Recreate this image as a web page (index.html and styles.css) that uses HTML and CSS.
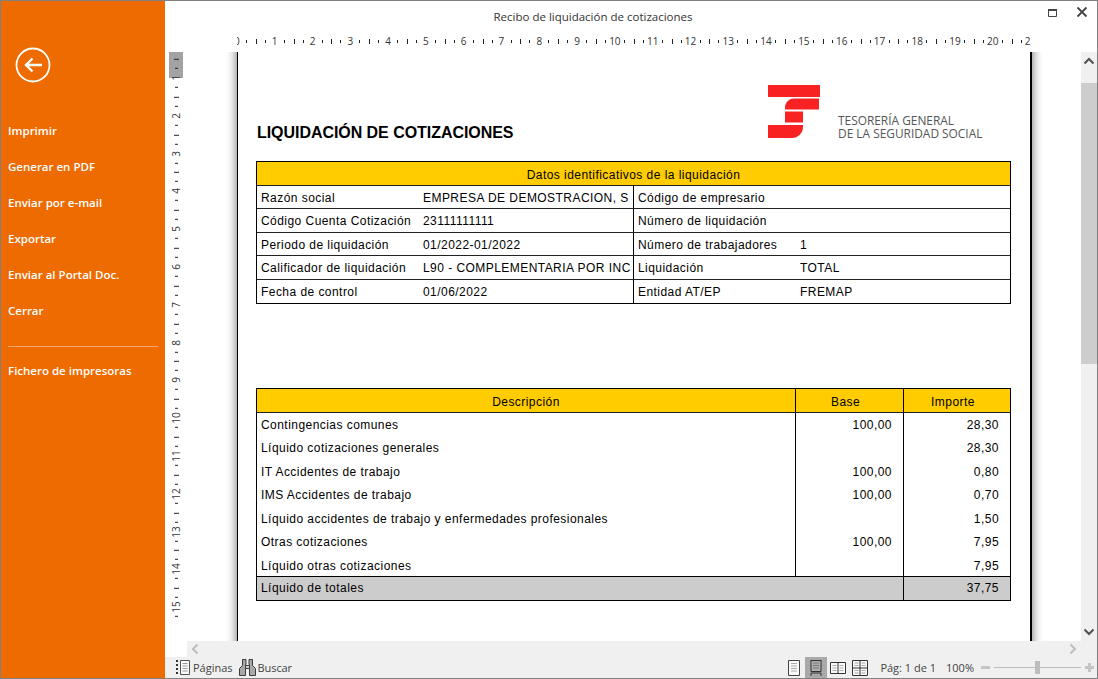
FILE: index.html
```html
<!DOCTYPE html>
<html lang="es">
  <head>
    <meta charset="utf-8" />
    <title>Recibo de liquidación de cotizaciones</title>
    <link rel="stylesheet" href="styles.css">
  </head>
  <body>
    <div class="window">
      <!--Sidebar-->
      <nav class="sidebar">
        <div class="back-button">
          <svg width="36" height="36" viewBox="0 0 36 36">
            <circle cx="18" cy="18" r="16.5" fill="none" stroke="#fff" stroke-width="1.800"></circle>
            <path d="M27 18H11M17.5 11.5L11 18l6.500 6.500" fill="none" stroke="#fff" stroke-width="2.400"></path>
          </svg>
        </div>
        <ul class="menu">
          <li>Imprimir</li>
          <li>Generar en PDF</li>
          <li>Enviar por e-mail</li>
          <li>Exportar</li>
          <li>Enviar al Portal Doc.</li>
          <li>Cerrar</li>
        </ul>
        <div class="menu-separator"></div>
        <ul class="menu">
          <li>Fichero de impresoras</li>
        </ul>
      </nav>

      <div class="main">
        <!--Title-->
        <header class="titlebar">
          <span class="title">Recibo de liquidación de cotizaciones</span>
          <div class="window-buttons">
            <svg width="11" height="11" viewBox="0 0 11 11">
              <path d="M1.500 2.500h8v7h-8z" fill="none" stroke="#444" stroke-width="1"></path>
              <path d="M1 3h9" stroke="#444" stroke-width="2"></path>
            </svg>
            <svg width="12" height="12" viewBox="0 0 12 12">
              <path d="M1.500 1.500l9 9M10.500 1.500l-9 9" stroke="#444" stroke-width="1.800"></path>
            </svg>
          </div>
        </header>

        <!--Horizontal ruler-->
        <div class="hruler">
          <span>0</span><span>1</span><span>2</span><span>3</span><span>4</span><span>5</span><span>6</span><span>7</span><span>8</span><span>9</span><span>10</span><span>11</span><span>12</span><span>13</span><span>14</span><span>15</span><span>16</span><span>17</span><span>18</span><span>19</span><span>20</span><span class="hruler-end">2</span>
        </div>

        <div class="workspace">
          <!--Vertical ruler-->
          <div class="vruler">
            <span>1</span><span>2</span><span>3</span><span>4</span><span>5</span><span>6</span><span>7</span><span>8</span><span>9</span><span>10</span><span>11</span><span>12</span><span>13</span><span>14</span><span>15</span>
          </div>

          <div class="viewport">
            <div class="page">
              <div class="report-header">
                <h1 class="report-title">LIQUIDACIÓN DE COTIZACIONES</h1>
                <div class="logo">
                  <svg class="logo-mark" width="52" height="54" viewBox="0 0 52 54">
                    <path d="M0 1h52v12H0z" fill="#f92222"></path>
                    <path d="M51 14.500v11H17v-2c0-5 4-9 9-9z" fill="#f92222"></path>
                    <path d="M17 27.500h18v11H17z" fill="#f92222"></path>
                    <path d="M0 41h35v2c0 6-5 11-11 11H0z" fill="#f92222"></path>
                  </svg>
                  <div class="logo-text">TESORERÍA GENERAL<br>DE LA SEGURIDAD SOCIAL</div>
                </div>
              </div>

              <!--Identification table-->
              <div class="report-table id-table">
                <div class="row head-row">
                  <div class="cell cell-center">Datos identificativos de la liquidación</div>
                </div>
                <div class="row">
                  <div class="id-half"><span class="id-label">Razón social</span><span class="id-value">EMPRESA DE DEMOSTRACION, S</span></div>
                  <div class="id-half id-right"><span class="id-label">Código de empresario</span></div>
                </div>
                <div class="row">
                  <div class="id-half"><span class="id-label">Código Cuenta Cotización</span><span class="id-value">23111111111</span></div>
                  <div class="id-half id-right"><span class="id-label">Número de liquidación</span></div>
                </div>
                <div class="row">
                  <div class="id-half"><span class="id-label">Periodo de liquidación</span><span class="id-value">01/2022-01/2022</span></div>
                  <div class="id-half id-right"><span class="id-label">Número de trabajadores</span><span class="id-value">1</span></div>
                </div>
                <div class="row">
                  <div class="id-half"><span class="id-label">Calificador de liquidación</span><span class="id-value">L90 - COMPLEMENTARIA POR INC</span></div>
                  <div class="id-half id-right"><span class="id-label">Liquidación</span><span class="id-value">TOTAL</span></div>
                </div>
                <div class="row">
                  <div class="id-half"><span class="id-label">Fecha de control</span><span class="id-value">01/06/2022</span></div>
                  <div class="id-half id-right"><span class="id-label">Entidad AT/EP</span><span class="id-value">FREMAP</span></div>
                </div>
              </div>

              <!--Amounts table-->
              <div class="report-table amounts-table">
                <div class="row head-row">
                  <div class="cell cell-center col-desc">Descripción</div>
                  <div class="cell cell-center col-num">Base</div>
                  <div class="cell cell-center col-num col-last">Importe</div>
                </div>
                <div class="amounts-body">
                  <div class="row plain-row"><div class="cell col-desc">Contingencias comunes</div><div class="cell cell-right col-num">100,00</div><div class="cell cell-right col-num col-last">28,30</div></div>
                  <div class="row plain-row"><div class="cell col-desc">Líquido cotizaciones generales</div><div class="cell cell-right col-num"></div><div class="cell cell-right col-num col-last">28,30</div></div>
                  <div class="row plain-row"><div class="cell col-desc">IT Accidentes de trabajo</div><div class="cell cell-right col-num">100,00</div><div class="cell cell-right col-num col-last">0,80</div></div>
                  <div class="row plain-row"><div class="cell col-desc">IMS Accidentes de trabajo</div><div class="cell cell-right col-num">100,00</div><div class="cell cell-right col-num col-last">0,70</div></div>
                  <div class="row plain-row"><div class="cell col-desc">Líquido accidentes de trabajo y enfermedades profesionales</div><div class="cell cell-right col-num"></div><div class="cell cell-right col-num col-last">1,50</div></div>
                  <div class="row plain-row"><div class="cell col-desc">Otras cotizaciones</div><div class="cell cell-right col-num">100,00</div><div class="cell cell-right col-num col-last">7,95</div></div>
                  <div class="row plain-row"><div class="cell col-desc">Líquido otras cotizaciones</div><div class="cell cell-right col-num"></div><div class="cell cell-right col-num col-last">7,95</div></div>
                </div>
                <div class="row total-row">
                  <div class="cell col-total">Líquido de totales</div>
                  <div class="cell cell-right col-num col-last">37,75</div>
                </div>
              </div>
            </div>
          </div>

          <!--Vertical scrollbar-->
          <div class="vscroll">
            <svg width="16" height="16" viewBox="0 0 16 16"><path d="M3.500 10.500L8 6l4.500 4.500" fill="none" stroke="#505050" stroke-width="2"></path></svg>
            <div class="vscroll-track"><div class="vscroll-thumb"></div></div>
            <svg width="16" height="16" viewBox="0 0 16 16"><path d="M3.500 5.500L8 10l4.500-4.500" fill="none" stroke="#505050" stroke-width="2"></path></svg>
          </div>
        </div>

        <!--Horizontal scrollbar-->
        <div class="hscroll">
          <svg width="16" height="16" viewBox="0 0 16 16"><path d="M10.500 3.500L6 8l4.500 4.500" fill="none" stroke="#bdbdbd" stroke-width="2"></path></svg>
          <svg width="16" height="16" viewBox="0 0 16 16"><path d="M5.500 3.500L10 8l-4.500 4.500" fill="none" stroke="#bdbdbd" stroke-width="2"></path></svg>
        </div>

        <!--Status bar-->
        <footer class="statusbar">
          <div class="status-left">
            <svg width="16" height="15" viewBox="0 0 16 15">
              <path d="M1 0h2v2H1zM1 4h2v2H1zM1 8h2v2H1zM1 12h2v2H1z" fill="#333"></path>
              <path d="M5.500 .5h9v14h-9z" fill="#fafafa" stroke="#555"></path>
              <path d="M7.500 3.500h5M7.500 6h5M7.500 8.500h5M7.500 11h5" stroke="#999"></path>
            </svg>
            <span>Páginas</span>
            <svg class="status-binoculars" width="17" height="17" viewBox="0 0 17 17">
              <path d="M3.500 .5h3.500v5h-.5v11H.500v-7l3-3zM13.500 .5H10v5h.5v11h6v-7l-3-3z" fill="#a8a8a8" stroke="#3c3c3c"></path>
              <path d="M6.500 6.500h4v3h-4z" fill="#d0d0d0" stroke="#3c3c3c"></path>
            </svg>
            <span class="status-search">Buscar</span>
          </div>
          <div class="status-right">
            <div class="view-buttons">
              <div class="view-button">
                <svg width="12" height="16" viewBox="0 0 12 16"><path d="M.5.500h11v15H.500z" fill="#fafafa" stroke="#444"></path><path d="M3 3.500h6M3 6h6M3 8.500h6M3 11h6" stroke="#aaa"></path></svg>
              </div>
              <div class="view-button view-button-active">
                <svg width="12" height="16" viewBox="0 0 12 16"><path d="M1 0v11.500h10V0M1 .5h10" fill="#b0b0b0" stroke="#333"></path><path d="M3 3h6M3 5.500h6M3 8h6" stroke="#777"></path><path d="M1 16v-3h10v3" fill="none" stroke="#333"></path></svg>
              </div>
              <div class="view-button">
                <svg width="16" height="12" viewBox="0 0 16 12"><path d="M.5.500h15v11H.500zM8 .5v11" fill="#fafafa" stroke="#333"></path><path d="M2.500 3.500h4M2.500 6h4M2.500 8.500h4M9.500 3.500h4M9.500 6h4M9.500 8.500h4" stroke="#aaa"></path></svg>
              </div>
              <div class="view-button">
                <svg width="16" height="16" viewBox="0 0 16 16"><path d="M.5.500h15v15H.500zM8 .5v15M.5 8h15" fill="#fafafa" stroke="#333"></path><path d="M2.500 3h4M2.500 5.500h4M9.500 3h4M9.500 5.500h4M2.500 10.500h4M2.500 13h4M9.500 10.500h4M9.500 13h4" stroke="#aaa"></path></svg>
              </div>
            </div>
            <span class="page-count">Pág: 1 de 1</span>
            <span class="zoom-level">100%</span>
            <div class="zoom-control">
              <span class="zoom-minus"></span>
              <div class="zoom-slider"><span class="zoom-knob"></span></div>
              <span class="zoom-plus"></span>
            </div>
          </div>
        </footer>
      </div>
    </div>
  </body>
</html>
```

FILE: styles.css
```css
* {
  box-sizing: border-box;
}
html,
body {
  margin: 0;
  height: 100%;
  overflow: hidden;
}
.window {
  display: flex;
  width: 1098px;
  height: 679px;
  border: 1px solid #808080;
  background-color: #fff;
  font-family: "Open Sans", sans-serif;
}

/* sidebar */
.sidebar {
  width: 164px;
  flex-shrink: 0;
  background-color: #ed6b00;
  color: #fff;
  padding-top: 46px;
}
.back-button {
  height: 36px;
  margin: 0 0 0 14px;
}
.menu {
  list-style: none;
  margin: 0;
  padding: 0;
}
.back-button + .menu {
  margin-top: 30px;
}
.menu li {
  height: 36px;
  padding-left: 7px;
  font-size: 11.500px;
  font-weight: 600;
  line-height: 36px;
  white-space: nowrap;
}
.menu-separator {
  height: 1px;
  margin: 17px 7px 6px;
  background-color: #f6a868;
}

/* title bar */
.main {
  flex: 1;
  min-width: 0;
  display: flex;
  flex-direction: column;
}
.titlebar {
  height: 31px;
  flex-shrink: 0;
  display: flex;
  align-items: center;
  justify-content: center;
  position: relative;
  font-size: 11.500px;
  color: #333;
  padding-right: 76px;
}
.window-buttons {
  position: absolute;
  right: 9px;
  top: 5px;
  display: flex;
  align-items: center;
  gap: 18px;
}

/* rulers */
.hruler {
  height: 20px;
  width: 795px;
  flex-shrink: 0;
  display: flex;
  margin-left: 72px;
  font: 10px "Open Sans", sans-serif;
  color: #333;
  overflow: hidden;
}
.hruler span {
  width: 37.800px;
  flex-shrink: 0;
  height: 20px;
  line-height: 18px;
  text-align: center;
  background-image:
    linear-gradient(#222, #222),
    linear-gradient(#222, #222),
    linear-gradient(#222, #222);
  background-repeat: no-repeat;
  background-size: 1px 3px, 1px 5px, 1px 3px;
  background-position: 9px 8px, 0 7px, 28px 8px;
}
.hruler span:first-child {
  margin-left: -19px;
}
.hruler .hruler-end {
  text-align: left;
  padding-left: 13px;
}
.workspace {
  flex: 1;
  min-height: 0;
  display: flex;
}
.vruler {
  width: 18px;
  flex-shrink: 0;
  margin-left: 4px;
  padding-top: 7px;
  display: flex;
  flex-direction: column;
  font: 10px "Open Sans", sans-serif;
  color: #333;
  overflow: hidden;
  background:
    linear-gradient(#a3a3a3, #a3a3a3) 0 0 / 14px 26px no-repeat;
}
.vruler span {
  height: 37.800px;
  flex-shrink: 0;
  width: 14px;
  display: flex;
  align-items: center;
  justify-content: center;
  line-height: 14px;
  writing-mode: vertical-rl;
  transform: rotate(180deg);
  background-image:
    linear-gradient(#222, #222),
    linear-gradient(#222, #222),
    linear-gradient(#222, #222);
  background-repeat: no-repeat;
  background-size: 3px 1px, 5px 1px, 3px 1px;
  background-position: 5px 9px, 4px 100%, 5px 28px;
}

/* page */
.viewport {
  flex: 1;
  min-width: 0;
  overflow: hidden;
  display: flex;
  padding-left: 50px;
}
.page {
  width: 795px;
  flex-shrink: 0;
  margin: -20px 0;
  background-color: #fff;
  border-left: 1px solid #000;
  border-right: 2px solid #000;
  box-shadow: 0 0 10px rgba(0, 0, 0, 0.6);
  padding: 20px 19px 0 18px;
  font-family: "Liberation Sans", Arial, sans-serif;
  color: #000;
}
.report-header {
  height: 109px;
  display: flex;
  justify-content: space-between;
  padding-top: 32px;
}
.report-title {
  margin: 39px 0 0 1px;
  font-size: 16px;
  line-height: 20px;
  font-weight: 700;
  letter-spacing: -0.050px;
}
.logo {
  display: flex;
  align-items: flex-start;
  width: 243px;
}
.logo-mark {
  display: block;
  flex-shrink: 0;
  margin-right: 18px;
}
.logo-text {
  margin-top: 30px;
  font: 11.900px/13px "Open Sans", sans-serif;
  color: #555;
  white-space: nowrap;
}

/* report tables */
.report-table {
  width: 755px;
  font-size: 12px;
  letter-spacing: 0.450px;
  border: 1px solid #000;
}
.amounts-table {
  margin-top: 84px;
}
.row {
  display: flex;
  height: 23.500px;
  border-bottom: 1px solid #222;
  line-height: 24px;
}
.row:last-child {
  border-bottom: none;
}
.head-row {
  background-color: #ffcc00;
  line-height: 26px;
}
.cell {
  padding: 0 4px;
  white-space: nowrap;
  overflow: hidden;
}
.cell-center {
  flex: 1;
  text-align: center;
}
.cell-right {
  text-align: right;
  padding-right: 11px;
}
.id-half {
  width: 376px;
  display: flex;
  padding-left: 4px;
  overflow: hidden;
  white-space: nowrap;
}
.id-right {
  flex: 1;
  padding-left: 4px;
  border-left: 1px solid #000;
}
.id-label {
  width: 162px;
  flex-shrink: 0;
}
.id-value {
  overflow: hidden;
}
.col-desc {
  flex: none;
  width: 538px;
}
.col-num {
  flex: none;
  width: 108px;
  border-left: 1px solid #000;
}
.col-num.cell-center {
  padding-right: 12px;
}
.col-last {
  width: 107px;
}
.col-total {
  width: 646px;
  flex: none;
}
.plain-row {
  border-bottom: none;
}
.total-row {
  margin-top: -1px;
  background-color: #cccccc;
  border-top: 1px solid #000;
  line-height: 22px;
}

/* scrollbars */
.vscroll {
  width: 16px;
  flex-shrink: 0;
  background-color: #f0f0f0;
  display: flex;
  flex-direction: column;
  align-items: center;
}
.vscroll svg {
  flex-shrink: 0;
  margin: 1px 0 14px;
}
.vscroll-track + svg {
  margin: 0 0 1px;
}
.vscroll-track {
  flex: 1;
  width: 100%;
}
.vscroll-thumb {
  height: 281px;
  background-color: #cdcdcd;
}
.hscroll {
  height: 16px;
  flex-shrink: 0;
  margin-left: 22px;
  padding-right: 16px;
  background-color: #f0f0f0;
  display: flex;
  align-items: center;
  justify-content: space-between;
}

/* status bar */
.statusbar {
  height: 21px;
  flex-shrink: 0;
  background-color: #f0f0f0;
  display: flex;
  align-items: center;
  justify-content: space-between;
  font-size: 11px;
  color: #444;
}
.status-left,
.status-right {
  display: flex;
  align-items: center;
}
.status-left {
  padding-left: 10px;
  gap: 2px;
}
.status-binoculars {
  margin-left: 4px;
}
.status-search {
  letter-spacing: -0.100px;
}
.view-buttons {
  display: flex;
  align-items: center;
}
.view-button {
  width: 22px;
  height: 21px;
  display: flex;
  align-items: center;
  justify-content: center;
}
.view-button-active {
  background-color: #a9a9a9;
}
.page-count {
  margin-left: 9px;
}
.zoom-level {
  margin-left: 10px;
}
.zoom-control {
  display: flex;
  align-items: center;
  margin: 0 3px 0 7px;
  gap: 3px;
}
.zoom-minus,
.zoom-plus {
  width: 9px;
  height: 3px;
  background-color: #c4c4c4;
  position: relative;
}
.zoom-plus::after {
  content: "";
  position: absolute;
  left: 3px;
  top: -3px;
  width: 3px;
  height: 9px;
  background-color: #c4c4c4;
}
.zoom-slider {
  width: 87px;
  height: 1px;
  margin: 0 1px;
  background-color: #bdbdbd;
  display: flex;
  justify-content: center;
  align-items: center;
}
.zoom-knob {
  width: 5px;
  height: 13px;
  flex-shrink: 0;
  background-color: #bdbdbd;
}
```
